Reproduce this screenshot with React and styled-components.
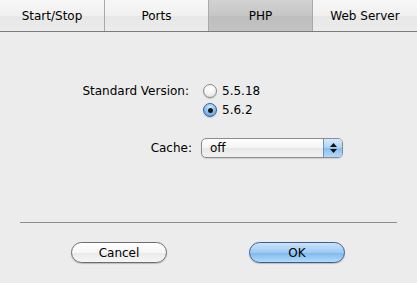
import React, { useState } from "react";
import styled, { createGlobalStyle } from "styled-components";

const Global = createGlobalStyle`
  html, body { margin: 0; padding: 0; background: #ececec; }
  body { font-family: "DejaVu Sans", "Lucida Grande", sans-serif; font-size: 12px; color: #000; }
`;

const Window = styled.div`
  width: 417px;
  height: 283px;
  background: #ececec;
  display: flex;
  flex-direction: column;
`;

const TabBar = styled.div`
  display: grid;
  grid-template-columns: 104px 104px 104px 105px;
  height: 31px;
  border-bottom: 1px solid #7a7a7a;
`;

const Tab = styled.div`
  display: flex;
  align-items: center;
  justify-content: center;
  border-left: ${(p) => (p.$first ? "none" : "1px solid #a9a9a9")};
  background: ${(p) =>
    p.$active
      ? "linear-gradient(#d2d2d2, #c6c6c6 50%, #bdbdbd 51%, #c3c3c3)"
      : "linear-gradient(#f7f7f7, #f0f0f0 50%, #e7e7e7 51%, #ececec)"};
  font-size: 12px;
  padding-top: 1px;
`;

const Body = styled.div`
  flex: 1;
  display: flex;
  flex-direction: column;
  padding: 50px 20px 0 20px;
`;

const Form = styled.div`
  display: grid;
  grid-template-columns: 172px auto;
  column-gap: 9px;
  align-items: start;
`;

const Label = styled.div`
  text-align: right;
  line-height: 18px;
  padding-top: ${(p) => p.$pt || 0}px;
  padding-right: ${(p) => p.$pr || 0}px;
`;

const RadioGroup = styled.div`
  display: flex;
  flex-direction: column;
  gap: 1px;
`;

const RadioRow = styled.label`
  display: flex;
  align-items: center;
  gap: 5px;
  height: 18px;
  margin-left: 2px;
`;

const RadioDot = styled.span`
  width: 14px;
  height: 14px;
  border-radius: 50%;
  box-sizing: border-box;
  border: 1px solid ${(p) => (p.$on ? "#3a5f9a" : "#8a8a8a")};
  background: ${(p) =>
    p.$on
      ? "radial-gradient(circle at 50% 30%, #d6ebfc 0%, #92c6f0 45%, #4a93da 100%)"
      : "radial-gradient(circle at 50% 30%, #ffffff 0%, #f3f3f3 50%, #d4d4d4 100%)"};
  display: flex;
  align-items: center;
  justify-content: center;
  box-shadow: 0 1px 1px rgba(0,0,0,0.15);
  &::after {
    content: "";
    display: ${(p) => (p.$on ? "block" : "none")};
    width: 5px;
    height: 5px;
    border-radius: 50%;
    background: #1a1a1a;
  }
`;

const SelectBox = styled.div`
  margin-top: 19px;
  width: 142px;
  height: 20px;
  box-sizing: border-box;
  border: 1px solid #8c8c8c;
  border-radius: 5px;
  display: flex;
  overflow: hidden;
  background: linear-gradient(#ffffff, #f4f4f4 50%, #e8e8e8 51%, #f2f2f2);
  box-shadow: 0 1px 1px rgba(0,0,0,0.12);
`;

const SelectText = styled.div`
  flex: 1;
  padding-left: 8px;
  line-height: 18px;
`;

const SelectArrows = styled.div`
  width: 18px;
  border-left: 1px solid #6f8fc0;
  background: linear-gradient(#d6eafb, #a9d2f5 50%, #86bdee 51%, #b3dafa);
  display: flex;
  flex-direction: column;
  align-items: center;
  justify-content: center;
  gap: 2px;
`;

const Separator = styled.div`
  margin-top: 64px;
  height: 1px;
  background: #8f8f8f;
`;

const ButtonRow = styled.div`
  display: flex;
  justify-content: space-between;
  padding: 19px 52px 0 51px;
`;

const Button = styled.button`
  width: 96px;
  height: 21px;
  border-radius: 11px;
  border: 1px solid ${(p) => (p.$primary ? "#3d5d92" : "#6d6d6d")};
  font-family: inherit;
  font-size: 12px;
  color: #000;
  padding: 0;
  background: ${(p) =>
    p.$primary
      ? "linear-gradient(#cbe3f8, #9ccbf2 50%, #7db8ec 51%, #b1dbfb)"
      : "linear-gradient(#ffffff, #f6f6f6 50%, #e9e9e9 51%, #f6f6f6)"};
  box-shadow: 0 1px 1px rgba(0,0,0,0.2);
`;

const Arrow = ({ up }) => (
  <svg width="7" height="4" viewBox="0 0 7 4">
    <path d={up ? "M3.5 0 L7 4 L0 4 Z" : "M0 0 L7 0 L3.5 4 Z"} fill="#111" />
  </svg>
);

export default function App() {
  const [ver, setVer] = useState("5.6.2");
  const tabs = ["Start/Stop", "Ports", "PHP", "Web Server"];
  return (
    <Window>
      <Global />
      <TabBar>
        {tabs.map((t, i) => (
          <Tab key={t} $first={i === 0} $active={t === "PHP"}>{t}</Tab>
        ))}
      </TabBar>
      <Body>
        <Form>
          <Label $pr={3}>Standard Version:</Label>
          <RadioGroup>
            {["5.5.18", "5.6.2"].map((v) => (
              <RadioRow key={v} onClick={() => setVer(v)}>
                <RadioDot $on={ver === v} />
                {v}
              </RadioRow>
            ))}
          </RadioGroup>
          <Label $pt={20}>Cache:</Label>
          <SelectBox>
            <SelectText>off</SelectText>
            <SelectArrows>
              <Arrow up />
              <Arrow />
            </SelectArrows>
          </SelectBox>
        </Form>
        <Separator />
        <ButtonRow>
          <Button>Cancel</Button>
          <Button $primary>OK</Button>
        </ButtonRow>
      </Body>
    </Window>
  );
}
